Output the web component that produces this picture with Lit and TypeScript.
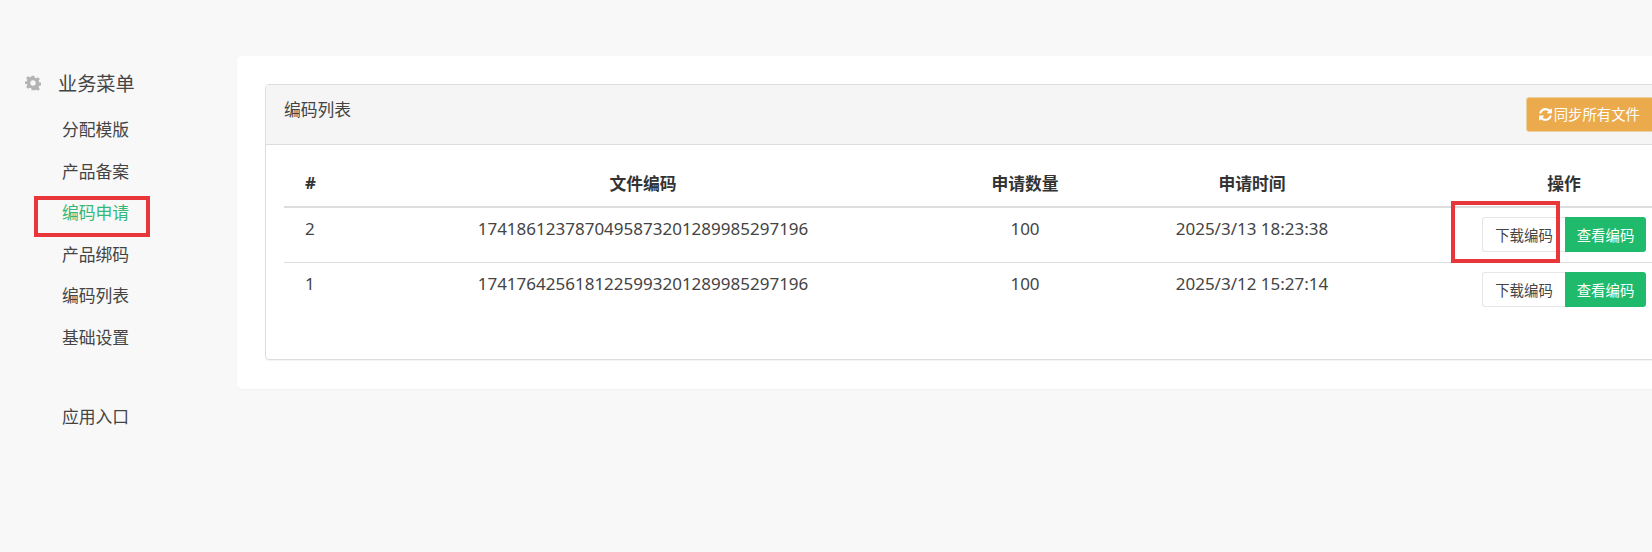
import { LitElement, html, css } from "lit";
import { customElement } from "lit/decorators.js";

const rows = [
  { id: 2, code: "1741861237870495873201289985297196", qty: 100, time: "2025/3/13 18:23:38" },
  { id: 1, code: "1741764256181225993201289985297196", qty: 100, time: "2025/3/12 15:27:14" },
];
const menu = ["分配模版", "产品备案", "编码申请", "产品绑码", "编码列表", "基础设置"];

@customElement("app-root")
export class AppRoot extends LitElement {
  static styles = css`
    :host {
      display: block;
      position: relative;
      width: 1652px;
      height: 552px;
      overflow: hidden;
      background: #f8f8f8;
      color: #444;
      font-family: "Noto Sans", "Noto Sans CJK SC", sans-serif;
      font-size: 16.8px;
    }
    .layout { display: flex; align-items: flex-start; padding-top: 56px; }
    .side { width: 237px; flex: none; }
    .side-title {
      display: flex; align-items: center; height: 54px; margin-bottom: -1px; padding-left: 25px; font-size: 19.200px; color: #444;
    }
    .side-title svg { width: 16px; height: 16px; margin-right: 17px; fill: #b4b4b4; }
    .side-list { margin: 0; padding: 0 0 0 62px; list-style: none; }
    .side-list li { height: 41.6px; line-height: 41.6px; white-space: nowrap; }
    .side-list li.on { color: #35b777; }
    .side-list li.gap { margin-top: 37.600px; }
    .card {
      width: 1480px; flex: none; background: #fff; border-radius: 5px; padding: 28px 0 0 28px;
      box-sizing: border-box; height: 333px; box-shadow: 0 1px 2px rgba(0,0,0,0.03);
    }
    .panel {
      width: 1408px; height: 276px; box-sizing: border-box; border: 1px solid #ddd; border-radius: 4px;
      box-shadow: 0 1px 1px rgba(0,0,0,0.05);
    }
    .head {
      display: flex; justify-content: space-between; height: 60px; box-sizing: border-box;
      background: #f5f5f5; border-bottom: 1px solid #ddd; padding: 12px 18px 0 18px;
    }
    .head-title { line-height: 26px; }
    .sync {
      display: flex; align-items: center; height: 35px; box-sizing: border-box; padding: 0 13px 2px 11px;
      background: #ebaa4c; color: #fff; border-radius: 3px; font-size: 14.4px; gap: 1px;
      border: 1px solid #ecd0a0;
    }
    .sync svg { width: 15px; height: 15px; fill: #fff; margin-top: 2px; }
    .body { padding: 18px 0 0 18px; }
    table { border-collapse: collapse; table-layout: fixed; width: 1444px; }
    th, td { text-align: center; padding: 0; }
    th { height: 44px; padding-bottom: 4px; box-sizing: border-box; border-bottom: 2px solid #ddd; font-weight: 700; color: #333; vertical-align: middle; }
    td { height: 55px; vertical-align: top; padding-top: 9px; box-sizing: border-box; font-size: 17px; }
    tr.line td { border-bottom: 1px solid #ddd; }
    .c1 { width: 56px; text-align: left; padding-left: 21px; box-sizing: border-box; }
    .c2 { width: 606px; }
    .c3 { width: 158px; }
    .c4 { width: 296px; }
    .c5 { width: 328px; }
    .btns { display: flex; justify-content: center; }
    .btn {
      display: flex; align-items: center; justify-content: center; height: 35px; box-sizing: border-box;
      font-size: 14.4px; border-radius: 3px; white-space: nowrap;
    }
    .btn.dl {
      width: 83px; background: #fff; border: 1px solid #e6e6e6; color: #444;
      border-top-right-radius: 0; border-bottom-right-radius: 0; border-right: none;
    }
    .btn.view {
      width: 81px; background: #1fba6b; color: #fff;
      border-top-left-radius: 0; border-bottom-left-radius: 0;
    }
    .mark { position: absolute; border: 4px solid #e8363b; box-sizing: border-box; pointer-events: none; }
    .mark.m1 { left: 34px; top: 196px; width: 116px; height: 41px; }
    .mark.m2 { left: 1451px; top: 201px; width: 109px; height: 62px; }
  `;

  render() {
    return html`
      <div class="layout">
        <aside class="side">
          <div class="side-title">
            <svg viewBox="0 0 24 24"><path fill-rule="evenodd" d="M10 1h4l.7 3.2 2 .8 2.800-1.800 2.800 2.800-1.800 2.800.8 2 3.200.7v4l-3.200.7-.8 2 1.800 2.800-2.800 2.800-2.800-1.800-2 .8L14 23h-4l-.7-3.200-2-.8-2.800 1.800-2.800-2.800 1.800-2.800-.8-2L-.5 14v-4l3.200-.7.8-2-1.800-2.800 2.800-2.800 2.800 1.800 2-.8zM12 8a4 4 0 1 0 0 8 4 4 0 0 0 0-8z"/></svg>
            业务菜单
          </div>
          <ul class="side-list">
            ${menu.map((m) => html`<li class=${m === "编码申请" ? "on" : ""}>${m}</li>`)}
            <li class="gap">应用入口</li>
          </ul>
        </aside>
        <main class="card">
          <section class="panel">
            <div class="head">
              <div class="head-title">编码列表</div>
              <div class="sync">
                <svg viewBox="0 0 1536 1792"><path d="M1511 1056q0 5-1 7-64 268-268 434.500t-478 166.500q-146 0-282.500-55t-243.500-157l-129 129q-19 19-45 19t-45-19-19-45v-448q0-26 19-45t45-19h448q26 0 45 19t19 45-19 45l-137 137q71 66 161 102t187 36q134 0 250-65t186-179q11-17 53-117 8-23 30-23h192q13 0 22.500 9.500t9.500 22.500zm25-800v448q0 26-19 45t-45 19h-448q-26 0-45-19t-19-45 19-45l138-138q-148-137-349-137-134 0-250 65t-186 179q-11 17-53 117-8 23-30 23h-199q-13 0-22.500-9.500t-9.500-22.500v-7q65-268 270-434.500t480-166.500q146 0 284 55.500t245 156.500l130-129q19-19 45-19t45 19 19 45z"/></svg>
                同步所有文件
              </div>
            </div>
            <div class="body">
              <table>
                <thead>
                  <tr>
                    <th class="c1">#</th>
                    <th class="c2">文件编码</th>
                    <th class="c3">申请数量</th>
                    <th class="c4">申请时间</th>
                    <th class="c5">操作</th>
                  </tr>
                </thead>
                <tbody>
                  ${rows.map(
                    (r, i) => html`<tr class=${i === 0 ? "line" : ""}>
                      <td class="c1">${r.id}</td>
                      <td class="c2">${r.code}</td>
                      <td class="c3">${r.qty}</td>
                      <td class="c4">${r.time}</td>
                      <td class="c5">
                        <div class="btns">
                          <div class="btn dl">下载编码</div>
                          <div class="btn view">查看编码</div>
                        </div>
                      </td>
                    </tr>`
                  )}
                </tbody>
              </table>
            </div>
          </section>
        </main>
      </div>
      <div class="mark m1"></div>
      <div class="mark m2"></div>
    `;
  }
}
